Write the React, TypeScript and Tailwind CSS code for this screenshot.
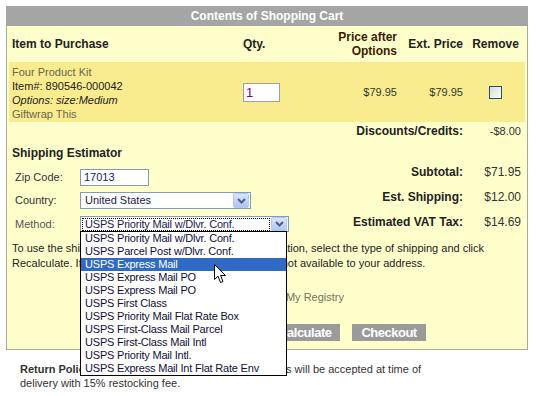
const ITEMS = [
  "USPS Priority Mail w/Dlvr. Conf.",
  "USPS Parcel Post w/Dlvr. Conf.",
  "USPS Express Mail",
  "USPS Express Mail PO",
  "USPS Express Mail PO",
  "USPS First Class",
  "USPS Priority Mail Flat Rate Box",
  "USPS First-Class Mail Parcel",
  "USPS First-Class Mail Intl",
  "USPS Priority Mail Intl.",
  "USPS Express Mail Int Flat Rate Env",
];

const ArrowButton = () => (
  <div className="w-[16px] h-[15px] flex items-center justify-center rounded-[2px] border border-[#b6c9f2] bg-linear-to-b from-[#dbe6fd] to-[#afc4f3]">
    <svg width="9" height="6" viewBox="0 0 9 6">
      <path d="M1 1 L4.5 4.5 L8 1" stroke="#4d6185" strokeWidth="2" fill="none" />
    </svg>
  </div>
);

const TotalRow = ({ label, value }: { label: string; value: string }) => (
  <div className="grid grid-cols-[141px_59px] leading-[14px] text-[12px]">
    <span className="text-right pr-[3px] font-bold text-[#222]">{label}</span>
    <span className="text-right pr-[4px] text-[#333]">{value}</span>
  </div>
);

const App = () => {
  return (
    <div className="w-[536px] h-[396px] bg-white relative overflow-hidden font-['Liberation_Sans',Arial,sans-serif]">
      <div className="ml-[6px] mt-[6px] w-[522px]">
        <div className="h-[20px] bg-[#a5a5a5] text-white text-[12px] font-bold flex items-center justify-center">
          Contents of Shopping Cart
        </div>
        <div className="border border-t-0 border-[#aaa99c] bg-[#ffffcc] px-[2px] pb-[8px]">
          {/* table head */}
          <div className="grid grid-cols-[231px_90px_70px_66px_59px] h-[36px] items-center text-[12px] font-bold text-[#222]">
            <span className="pl-[3px]">Item to Purchase</span>
            <span className="pl-[3px]">Qty.</span>
            <span className="text-right pr-[3px] leading-[14px] text-[#3a1c00]">
              Price after
              <br />
              Options
            </span>
            <span className="text-right pr-[3px]">Ext. Price</span>
            <span className="text-center">Remove</span>
          </div>

          {/* item row */}
          <div className="grid grid-cols-[231px_90px_70px_66px_59px] h-[60px] items-center bg-[#f9ec8f]">
            <div className="pl-[3px] text-[11px] leading-[14px] pt-[1px]">
              <div className="text-[#6b6650]">Four Product Kit</div>
              <div className="text-[#222]">Item#: 890546-000042</div>
              <div className="italic text-[#222]">Options: size:Medium</div>
              <div className="text-[#6b6650]">Giftwrap This</div>
            </div>
            <div className="pl-[3px]">
              <div className="w-[37px] h-[19px] border border-[#a0a0a0] bg-white text-[13px] leading-[17px] pl-[2px] text-[#800080]">
                1
              </div>
            </div>
            <span className="text-right pr-[3px] text-[11px] text-[#2f3a30]">$79.95</span>
            <span className="text-right pr-[3px] text-[11px] text-[#2f3a30]">$79.95</span>
            <div className="flex justify-center">
              <div className="w-[13px] h-[13px] border border-[#1c5180] bg-linear-to-br from-[#d8d8d2] to-white" />
            </div>
          </div>

          {/* discounts */}
          <div className="grid grid-cols-[457px_59px] h-[17px] items-center text-[12px]">
            <span className="text-right pr-[3px] font-bold text-[#222]">Discounts/Credits:</span>
            <span className="text-right pr-[4px] text-[11px] text-[#333]">-$8.00</span>
          </div>

          {/* shipping + totals */}
          <div className="flex">
            <div className="flex-1 pl-[3px] pt-[7px]">
              <div className="text-[12px] font-bold leading-[14px] text-[#222]">Shipping Estimator</div>
              <div className="flex items-center mt-[9px] text-[11px] text-[#333]">
                <span className="w-[68px] pl-[3px]">Zip Code:</span>
                <div className="w-[69px] h-[17px] border border-[#7f9db9] bg-white text-[11px] leading-[15px] pl-[3px] text-[#1b1b6b]">
                  17013
                </div>
              </div>
              <div className="flex items-center mt-[6px] text-[11px] text-[#333]">
                <span className="w-[68px] pl-[3px]">Country:</span>
                <div className="w-[171px] h-[17px] border border-[#7f9db9] bg-white flex items-center pr-px">
                  <span className="flex-1 text-[11px] pl-[4px] text-[#1b1b4b]">United States</span>
                  <ArrowButton />
                </div>
              </div>
              <div className="flex items-center mt-[7px] text-[11px] text-[#555]">
                <span className="w-[68px] pl-[3px]">Method:</span>
                <div className="w-[209px] h-[16px] border border-[#7f9db9] bg-white flex items-center pr-px">
                  <span className="flex-1 h-[13px] mx-px border border-dotted border-black text-[11px] tracking-[-0.2px] leading-[11px] pl-[2px] text-[#1b1b4b]">
                    USPS Priority Mail w/Dlvr. Conf.
                  </span>
                  <ArrowButton />
                </div>
              </div>
            </div>
            <div className="w-[200px] pt-[26px] flex flex-col gap-[11px]">
              <TotalRow label="Subtotal:" value="$71.95" />
              <TotalRow label="Est. Shipping:" value="$12.00" />
              <TotalRow label="Estimated VAT Tax:" value="$14.69" />
            </div>
          </div>

          <p className="mt-[8px] pl-[3px] text-[11px] leading-[15px] text-[#222] whitespace-nowrap">
            To use the shipping estimator, enter your zip and destination, select the type of shipping and click
            <br />
            Recalculate. If no shipping method is listed, shipping is not available to your address.
          </p>

          <div className="mt-[19px] text-center text-[11px] leading-[14px] text-[#77705a]">
            Move Cart Items to My Registry
          </div>

          <div className="mt-[20px] flex justify-center gap-[12px]">
            <span className="bg-[#9a9a9a] text-white font-bold text-[13px] tracking-[-0.5px] leading-[17px] px-[12px]">Continue Shopping</span>
            <span className="bg-[#9a9a9a] text-white font-bold text-[13px] tracking-[-0.5px] leading-[17px] px-[9px]">Recalculate</span>
            <span className="bg-[#9a9a9a] text-white font-bold text-[13px] tracking-[-0.5px] leading-[17px] px-[9px]">Checkout</span>
          </div>
        </div>
      </div>

      <p className="mt-[12px] pl-[20px] text-[11px] leading-[14px] text-[#333] whitespace-nowrap">
        <span className="font-bold">Return Policy:</span> Only new, unopened and unused goods will be accepted at time of
        <br />
        delivery with 15% restocking fee.
      </p>

      {/* open dropdown list */}
      <div className="absolute left-[80px] top-[231px] w-[207px] border border-black bg-white">
        {ITEMS.map((item, i) => (
          <div
            key={i}
            className={
              i === 2
                ? "h-[13px] text-[11px] tracking-[-0.2px] leading-[13px] pl-[4px] bg-[#316ac5] text-white whitespace-nowrap"
                : "h-[13px] text-[11px] tracking-[-0.2px] leading-[13px] pl-[4px] text-[#10103a] whitespace-nowrap"
            }
          >
            {item}
          </div>
        ))}
      </div>

      {/* mouse pointer */}
      <svg className="absolute left-[214px] top-[264px]" width="13" height="20" viewBox="0 0 13 20">
        <path
          d="M0.5 0.5 L0.5 15.5 L4 12.2 L6.5 18.5 L9 17.5 L6.6 11.5 L11.5 11.5 Z"
          fill="white"
          stroke="black"
          strokeWidth="1"
          strokeLinejoin="miter"
        />
      </svg>
    </div>
  );
};

export default App;
